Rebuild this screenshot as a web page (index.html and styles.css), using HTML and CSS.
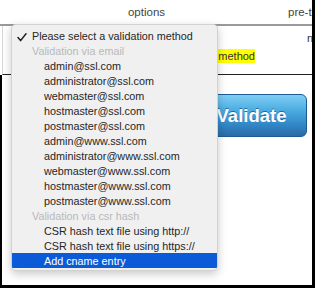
FILE: index.html
```html
<!DOCTYPE html>
<html>
<head>
<meta charset="utf-8">
<link rel="stylesheet" href="styles.css">
</head>
<body>
<div class="page">
  <div class="thead">
    <div class="th"></div>
    <div class="th th-options">options</div>
    <div class="th"></div>
    <div class="th th-pre">pre-test</div>
  </div>
  <div class="row">
    <div class="cell cell-main"><span class="mark">Please select a validation method</span></div>
    <div class="cell cell-side">none</div>
  </div>
  <div class="lower">
    <div class="actions">
      <button class="validate">Validate</button>
    </div>
  </div>

  <div class="menu">
    <div class="item title">
      <svg class="check" width="10" height="9" viewBox="0 0 10 9"><polyline points="1,4.6 3.6,7.6 9,0.8" fill="none" stroke="#1e1e1e" stroke-width="1.5" stroke-linecap="round" stroke-linejoin="round"/></svg>
      Please select a validation method
    </div>
    <div class="item group">Validation via email</div>
    <div class="item opt">admin@ssl.com</div>
    <div class="item opt">administrator@ssl.com</div>
    <div class="item opt">webmaster@ssl.com</div>
    <div class="item opt">hostmaster@ssl.com</div>
    <div class="item opt">postmaster@ssl.com</div>
    <div class="item opt">admin@www.ssl.com</div>
    <div class="item opt">administrator@www.ssl.com</div>
    <div class="item opt">webmaster@www.ssl.com</div>
    <div class="item opt">hostmaster@www.ssl.com</div>
    <div class="item opt">postmaster@www.ssl.com</div>
    <div class="item group">Validation via csr hash</div>
    <div class="item opt">CSR hash text file using http://</div>
    <div class="item opt">CSR hash text file using https://</div>
    <div class="item opt selected">Add cname entry</div>
  </div>
</div>
</body>
</html>
```

FILE: styles.css
```css
* { box-sizing: border-box; }
html, body { margin: 0; padding: 0; background: #fff; }
body { font-family: "Liberation Sans", Arial, sans-serif; }

.page {
  position: relative;
  width: 315px;
  height: 288px;
  overflow: hidden;
  background: #fff;
  border-right: 3px solid #000;
  border-bottom: 3px solid #000;
  display: flex;
  flex-direction: column;
}

.thead {
  display: grid;
  grid-template-columns: 100px 93px 95px 1fr;
  height: 26px;
  border-bottom: 2px solid #9a9a9a;
  font-size: 11.5px;
  color: #444;
  white-space: nowrap;
}
.th { padding-top: 6px; overflow: hidden; }
.th-options { text-align: center; }

.row {
  display: grid;
  grid-template-columns: 304px 1fr;
  height: 49px;
  border-bottom: 1px solid #222;
  border-left: 1px solid #d6d6d6;
  margin-left: 2px;
  font-size: 11px;
  color: #333;
  white-space: nowrap;
}
.cell-main { text-align: right; padding-right: 52px; padding-top: 24px; }
.mark { background: #ffff00; padding: 1px 0; line-height: 13px; }
.cell-side { padding-top: 6px; overflow: hidden; }

.lower {
  flex: 1;
  border-left: 2px solid #000;
}
.actions {
  display: flex;
  justify-content: flex-end;
  padding: 19px 5px 0 0;
}
.validate {
  width: 111px;
  height: 43px;
  border: 1px solid #1d5c92;
  border-radius: 6px;
  background: linear-gradient(#7fcff5 0%, #4eaee2 35%, #3389c8 70%, #2a6ba6 100%);
  color: #fff;
  font-family: "Liberation Sans", Arial, sans-serif;
  font-weight: bold;
  font-size: 18.5px;
  text-shadow: 0 -1px 0 rgba(0, 40, 90, 0.5);
  padding: 0;
}

.menu {
  position: absolute;
  left: 11px;
  top: 24px;
  width: 207px;
  height: 247px;
  background: #f0f0f0;
  border: 1px solid rgba(0, 0, 0, 0.12);
  border-radius: 5px;
  box-shadow: 0 3px 10px rgba(0, 0, 0, 0.22);
  padding-top: 3px;
  font-size: 10.8px;
  overflow: hidden;
}
.item {
  height: 15px;
  line-height: 16px;
  white-space: nowrap;
  color: #262626;
  position: relative;
}
.title, .group { padding-left: 20px; }
.opt { padding-left: 32px; }
.group { color: #b9b9b9; }
.check { position: absolute; left: 5px; top: 5px; }
.selected { background: #0b5bd8; color: #fff; }
```
